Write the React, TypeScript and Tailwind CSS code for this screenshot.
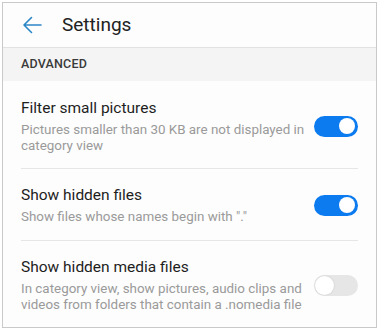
const rows = [
  {
    title: 'Filter small pictures',
    sub: ['Pictures smaller than 30 KB are not displayed in', 'category view'],
    on: true,
    pad: 'pt-[17px] pb-[14px] border-b border-[#e6e6e6]',
  },
  {
    title: 'Show hidden files',
    sub: ['Show files whose names begin with "."'],
    on: true,
    pad: 'pt-[16px] pb-[15px] border-b border-[#e6e6e6]',
  },
  {
    title: 'Show hidden media files',
    sub: ['In category view, show pictures, audio clips and', 'videos from folders that contain a .nomedia file'],
    on: false,
    pad: 'pt-[16px] pb-[12px]',
  },
];

const Toggle = ({ on }: { on: boolean }) => {
  return (
    <div
      className={
        on
          ? 'w-[44px] h-[21px] rounded-full bg-[#0c7bef] flex items-center justify-end pr-[3px] shrink-0'
          : 'w-[44px] h-[21px] rounded-full bg-[#e6e6e6] flex items-center justify-start pl-[1px] shrink-0'
      }
    >
      <div
        className={
          on
            ? 'w-[16px] h-[16px] rounded-full bg-white'
            : 'w-[19px] h-[19px] rounded-full bg-white shadow-[0_0_2px_rgba(0,0,0,0.15)]'
        }
      />
    </div>
  );
};

export default function App() {
  return (
    <div className="w-[380px] h-[330px] bg-white pt-[2px] pl-[2px] font-['Roboto',sans-serif]">
      <div className="w-[375px] h-[326px] border border-[#c9c9c9] bg-[#fdfdfd] flex flex-col overflow-hidden">
        <div className="h-[45px] flex items-center border-b border-[#e2e2e2] shrink-0">
          <svg className="ml-[19px]" width="20" height="18" viewBox="0 0 20 18" fill="none">
            <path
              d="M19 9H2M9.5 1.5L2 9l7.5 7.5"
              stroke="#2c87c7"
              strokeWidth="1.6"
              strokeLinecap="round"
              strokeLinejoin="round"
            />
          </svg>
          <span className="ml-[20px] text-[19px] text-[#222]">Settings</span>
        </div>
        <div className="h-[33px] bg-[#f4f4f4] flex items-center pl-[18px] shrink-0">
          <span className="text-[12.5px] font-medium text-[#3a3a3a] tracking-[0.2px]">ADVANCED</span>
        </div>
        <div className="flex flex-col px-[18px]">
          {rows.map((r) => (
            <div key={r.title} className={'flex items-center justify-between ' + r.pad}>
              <div className="flex flex-col">
                <span className="text-[15.5px] leading-[20px] text-[#1e1e1e]">{r.title}</span>
                <div className="mt-1 flex flex-col">
                  {r.sub.map((s) => (
                    <span key={s} className="text-[13.4px] leading-4 text-[#9a9a9a]">
                      {s}
                    </span>
                  ))}
                </div>
              </div>
              <Toggle on={r.on} />
            </div>
          ))}
        </div>
      </div>
    </div>
  );
}
